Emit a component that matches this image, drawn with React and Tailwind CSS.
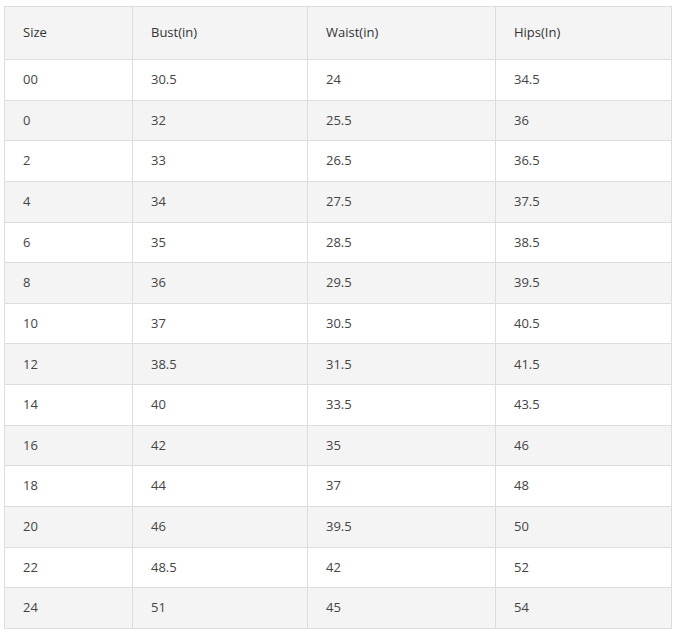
import React from "react";

const rows = [
  ["00", "30.5", "24", "34.5"],
  ["0", "32", "25.5", "36"],
  ["2", "33", "26.5", "36.5"],
  ["4", "34", "27.5", "37.5"],
  ["6", "35", "28.5", "38.5"],
  ["8", "36", "29.5", "39.5"],
  ["10", "37", "30.5", "40.5"],
  ["12", "38.5", "31.5", "41.5"],
  ["14", "40", "33.5", "43.5"],
  ["16", "42", "35", "46"],
  ["18", "44", "37", "48"],
  ["20", "46", "39.5", "50"],
  ["22", "48.5", "42", "52"],
  ["24", "51", "45", "54"],
];

const headers = ["Size", "Bust(in)", "Waist(in)", "Hips(In)"];

const App = () => {
  return (
    <div className="min-h-[639px] bg-white pl-1 pt-[6px] font-['Open_Sans',sans-serif] text-[13px] text-[#444]">
      <table className="w-[667px] table-fixed border-collapse border border-[#dddddd]">
        <colgroup>
          <col className="w-[128px]" />
          <col className="w-[175px]" />
          <col className="w-[188px]" />
          <col className="w-[176px]" />
        </colgroup>
        <thead>
          <tr className="h-[53px] bg-[#f4f4f4]">
            {headers.map((h) => (
              <th
                key={h}
                className="border border-[#dddddd] pl-[18px] text-left font-normal text-[#333]"
              >
                {h}
              </th>
            ))}
          </tr>
        </thead>
        <tbody>
          {rows.map((r, i) => (
            <tr
              key={r[0]}
              className={`h-[40.65px] ${i % 2 === 1 ? "bg-[#f4f4f4]" : "bg-white"}`}
            >
              {r.map((c, j) => (
                <td
                  key={j}
                  className="border border-[#dddddd] pl-[18px] text-left"
                >
                  {c}
                </td>
              ))}
            </tr>
          ))}
        </tbody>
      </table>
    </div>
  );
};

export default App;
